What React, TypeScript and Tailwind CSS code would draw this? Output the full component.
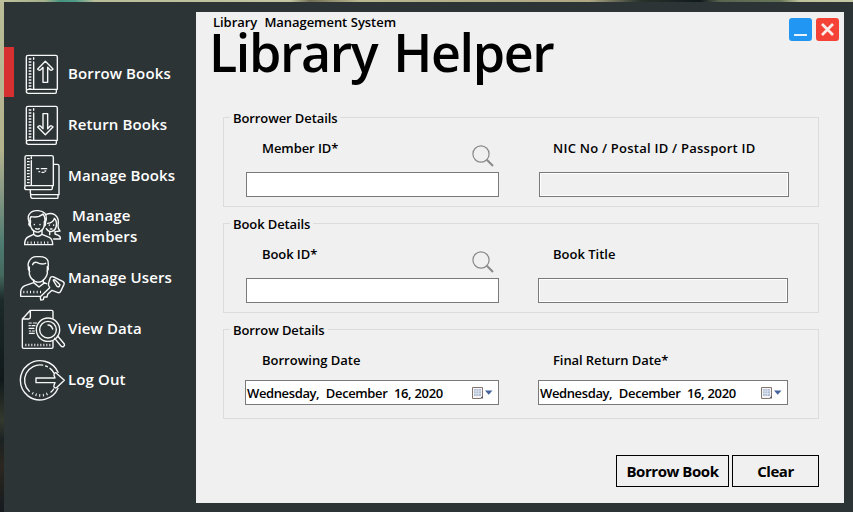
import React from "react";

function Icon({ box, children }: { box: string; children: React.ReactNode }) {
  return (
    <svg
      viewBox={box}
      className="h-[50px] w-[50px] shrink-0"
      fill="none"
      stroke="#f6f7f7"
      strokeWidth="4.2"
      strokeLinejoin="round"
      strokeLinecap="round"
    >
      {children}
    </svg>
  );
}

function BookFrame() {
  return (
    <>
      <path d="M79 148V51q0-5 5-5h83q5 0 5 5v97H85q-6 0-6 6t6 6h81q3 0 3-4v-8" />
      <path d="M101 66v82M101 53v5" />
      <path d="M90 55v92" strokeDasharray="4 5" strokeWidth="8" strokeLinecap="butt" />
    </>
  );
}

const BorrowIcon = () => (
  <Icon box="48 21 150 150">
    <BookFrame />
    <path d="M136 64l23 23q-5 6-9 2l-7-7v45h-14V82l-7 7q-4 4-9-2z" />
  </Icon>
);

const ReturnIcon = () => (
  <Icon box="48 21 150 150">
    <BookFrame />
    <path d="M136 131l23-23q-5-6-9-2l-7 7V68h-14v45l-7-7q-4-4-9 2z" />
  </Icon>
);

const BooksIcon = () => (
  <Icon box="48 3 150 150">
    <path d="M75 113V28q0-5 5-5h75q5 0 5 5v85H80q-6 0-6 6t6 6h74q3 0 3-4v-8M94 38v75M94 27v5" />
    <path d="M85 30v80" strokeDasharray="4 5" strokeWidth="8" strokeLinecap="butt" />
    <path d="M110 62h6M124 62h16M117 71h2M126 73h6M135 69h2" />
    <path d="M162 49h10q5 0 5 5v86H96q-5 0-5-5v-8M92 139q-1 12 6 12h73q3 0 3-4v-6" />
  </Icon>
);

const MembersIcon = () => (
  <Icon box="48 156 150 150">
    <path d="M88 225q-5-12-3-20l2-5q8-14 28-12 27 3 24 25l-3 12M92 222q-4-9 1-16 22 4 36-8 8 10 5 26M91 218v12q2 16 15 21 7 3 13 0 13-6 14-21v-10M88 223q-4 7 3 12M135 223q4 7-2 12" />
    <path d="M101 247v12l-17 8q-10 5-10 23h84q0-17-10-22l-22-9v-12M101 259q12 12 25 0" />
    <path d="M137 200q22-10 34 7 6 8 3 26 0 10 6 16l-13 2M143 226q17-2 20-15 8 7 6 23-3 15-16 17-9 0-14-9M165 250v8l10 4q7 3 6 11h-20M149 252v8" />
    <path d="M103 229v1M120 229v1M148 231v1M161 231v1M107 242q6 3 11 0M151 243h5" />
    <path d="M82 284h68" strokeDasharray="3 7" strokeWidth="7" strokeLinecap="butt" />
  </Icon>
);

const UsersIcon = () => (
  <Icon box="48 9 150 150">
    <path d="M88 62q-7-10-1-22 8-16 26-14 26-2 31 13 3 14-1 25M98 50q2-8 12-7 15 8 27 3M88 58v20q3 14 17 22 10 5 20 0 14-9 17-24V56M87 56q-5 5 2 15M143 56q5 6-2 14" />
    <path d="M101 96v8l-26 9q-12 5-13 19v13h58M130 96v7l10 4M101 104l16 13 17-13" />
    <path d="M70 132h54" strokeDasharray="3 7" strokeWidth="8" strokeLinecap="butt" />
    <path d="M151 89q4-5 10-2l27 13q6 3 4 9l-10 21q-2 5-8 4l-18-7-13 12-2 8h-9l-2 8-8 1-1-10 28-27q-6-8-3-15z" />
    <path d="M160 97l10 17q4 4 8 1l2-5-15-14q-4-2-5 1z" />
  </Icon>
);

const DataIcon = () => (
  <Icon box="48 162 150 150">
    <path d="M159 211v-20q0-4-4-4H91l-24 26v84q0 4 4 4h84q4 0 4-4v-17M91 187v21q0 5-5 5H67" />
    <circle cx="144" cy="245" r="35" />
    <circle cx="144" cy="245" r="25" />
    <path d="M144 231q10 0 14 12M173 264l20 24q2 5-2 7-4 3-8-1l-19-23" />
    <path d="M87 225h7M100 225h10M87 233h4M96 233h9M87 241h15M88 249h4M97 249h6M88 256h15" strokeWidth="3.500" />
    <path d="M76 291h78" strokeDasharray="3 6" strokeWidth="8" strokeLinecap="butt" />
  </Icon>
);

const LogOutIcon = () => (
  <Icon box="48 9 150 150">
    <path d="M174 67A59 59 0 1 0 174 115" />
    <path d="M88 124A46 46 0 0 1 128 45.500M137 48l5 2M150 55q8 6 11 13M161 117q-3 5-8 9" />
    <path d="M108 84h57l-3-8q-1-6 4-8 3 0 5 3l22 20-22 21q-3 3-7 1-4-2-2-7l3-8h-57z" />
    <path d="M97 129A46 46 0 0 0 148 128" strokeDasharray="3 8" strokeWidth="8" strokeLinecap="butt" />
  </Icon>
);

const nav = [
  { label: "Borrow Books", icon: <BorrowIcon />, active: true },
  { label: "Return Books", icon: <ReturnIcon /> },
  { label: "Manage Books", icon: <BooksIcon /> },
  { label: " Manage\nMembers", icon: <MembersIcon /> },
  { label: "Manage Users", icon: <UsersIcon /> },
  { label: "View Data", icon: <DataIcon /> },
  { label: "Log Out", icon: <LogOutIcon /> },
];

function Search() {
  return (
    <svg viewBox="0 0 22 22" className="mt-[6px] mr-[5.5px] h-[22px] w-[22px]" fill="none" stroke="#898989">
      <circle cx="9" cy="9" r="8.100" strokeWidth="1.200" />
      <path d="M14.800 14.800L21 21" strokeWidth="2" />
    </svg>
  );
}

function Calendar() {
  return (
    <svg viewBox="0 0 21 14" className="h-[14px] w-[21px]">
      <path d="M.500 1.500h10v9l-2 2h-8z" fill="#f5f5f7" stroke="#85756f" />
      <path d="M2 3h7v7H2z" fill="#b2bfd3" />
      <path d="M4 3v7M6.500 3v7M2 5h7M2 7.500h7" stroke="#e9eef6" strokeWidth=".6" />
      <path d="M8 12.500l3-3v3z" fill="#625b65" />
      <path d="M13 4.500h7.500L16.700 8.700z" fill="#46639b" />
    </svg>
  );
}

function Group({ title, children }: { title: string; children: React.ReactNode }) {
  return (
    <section className="relative flex h-[90px] w-[596px] border border-[#dcdcdc]">
      <h2 className="absolute -top-[10px] left-[6px] bg-[#f0f0f0] px-[3px] text-[13px] leading-[20px] tracking-[-0.1px]">
        {title}
      </h2>
      {children}
    </section>
  );
}

type FieldProps = {
  label: string;
  className: string;
  labelClass?: string;
  search?: boolean;
  readOnly?: boolean;
  date?: boolean;
};

function Field({ label, className, labelClass = "pl-4 tracking-[-0.08px]", search, readOnly, date }: FieldProps) {
  return (
    <div className={`flex flex-col ${className}`}>
      <div className={`flex items-start justify-between ${date ? "h-[29px]" : "h-[33px]"}`}>
        <label className={`text-[13px] leading-[18px] ${labelClass}`}>{label}</label>
        {search && <Search />}
      </div>
      <div
        className={`flex h-[25px] items-center justify-between border border-[#7a7a7a] text-[13px] ${
          readOnly ? "bg-[#f0f0f0] shadow-[inset_0_0_0_1px_#fff]" : "bg-white"
        }`}
      >
        {date && (
          <>
            <span className="pt-[2px] pl-[1px] tracking-[-0.38px] whitespace-pre [word-spacing:0.3px]">
              Wednesday,  December  16, 2020
            </span>
            <span className="pr-[5px]">
              <Calendar />
            </span>
          </>
        )}
      </div>
    </div>
  );
}

export default function App() {
  return (
    <div className="h-[512px] w-[853px] overflow-hidden bg-[linear-gradient(180deg,#b9bd98_0px,#b3b38d_150px,#8a9a85_190px,#4d7a70_245px,#45695f_275px,#1c2a29_300px,#10181a_380px,#34392e_420px,#1b2222_440px,#2b261f_465px,#151b1f_512px)] font-['Open_Sans','Noto_Sans',sans-serif] font-semibold text-black">
      <div className="h-[2px] w-[853px] bg-[linear-gradient(90deg,#bfc39c_0px,#a5ae8b_45px,#459480_60px,#4f9a88_75px,#b9be98_95px,#c3c6a0_290px,#716f54_310px,#b9b88f_360px,#ada782_590px,#29332d_640px,#10191b_700px,#59644f_720px,#667558_780px,#bfc39a_800px,#c5c9a5_853px)]" />
      <div className="ml-1 flex h-[510px] w-[849px] bg-[#2d3436]">
        <nav className="flex w-[192px] flex-col gap-px pt-[45px] text-white">
          {nav.map((item) => (
            <div key={item.label} className="flex h-[50px] items-center">
              <span className={`mr-[2px] h-[50px] w-[10px] shrink-0 ${item.active ? "bg-[#d63031]" : ""}`} />
              {item.icon}
              <span className="ml-[2px] pt-[2px] text-[15px] leading-[21px] tracking-[0.12px] whitespace-pre">
                {item.label}
              </span>
            </div>
          ))}
        </nav>
        <main className="mt-[10px] flex h-[491px] w-[648px] flex-col bg-[#f0f0f0]">
          <header className="flex h-[105px] justify-between pr-[5.5px] pl-[17px]">
            <div>
              <p className="text-[13px] leading-[20px] tracking-[-0.05px] whitespace-pre [word-spacing:0.3px]">
                Library  Management System
              </p>
              <h1 className="-mt-[5px] -ml-[4px] text-[52px] leading-[50px] tracking-[-1.4px] whitespace-nowrap [word-spacing:4px]">
                Library Helper
              </h1>
            </div>
            <div className="flex gap-1 pt-[5.5px]">
              <button className="flex h-[23px] w-[23px] items-end justify-center rounded-[3px] bg-[#2196f3] pb-[5px]">
                <span className="h-[2px] w-[13px] bg-[#e6f3fe]" />
              </button>
              <button className="flex h-[23px] w-[23px] items-center justify-center rounded-[3px] bg-[#f44336]">
                <svg viewBox="0 0 13 13" className="h-[13px] w-[13px]" stroke="#fdecea" strokeWidth="2.800">
                  <path d="M1 1l11 11M12 1L1 12" />
                </svg>
              </button>
            </div>
          </header>
          <div className="ml-[27px] flex flex-col gap-4">
            <Group title="Borrower Details">
              <Field label="Member ID*" search className="mt-[21px] ml-[22px] w-[253px]" />
              <Field
                label="NIC No / Postal ID / Passport ID"
                readOnly
                className="mt-[21px] ml-[40px] w-[250px]"
                labelClass="pl-[14px] tracking-[0.24px]"
              />
            </Group>
            <Group title="Book Details">
              <Field label="Book ID*" search className="mt-[21px] ml-[22px] w-[253px]" />
              <Field label="Book Title" readOnly className="mt-[21px] ml-[39px] w-[250px]" labelClass="pl-[15px]" />
            </Group>
            <Group title="Borrow Details">
              <Field label="Borrowing Date" date className="mt-[21px] ml-[21px] w-[254px]" labelClass="pl-[17px]" />
              <Field
                label="Final Return Date*"
                date
                className="mt-[21px] ml-[39px] w-[250px]"
                labelClass="pl-[15px] tracking-[-0.08px]"
              />
            </Group>
          </div>
          <footer className="mt-9 flex justify-end gap-[3px] pr-[25px] text-[15px] font-bold tracking-[-0.45px]">
            <button className="h-8 w-[113px] border border-black">Borrow Book</button>
            <button className="h-8 w-[87px] border border-black">Clear</button>
          </footer>
        </main>
      </div>
    </div>
  );
}
